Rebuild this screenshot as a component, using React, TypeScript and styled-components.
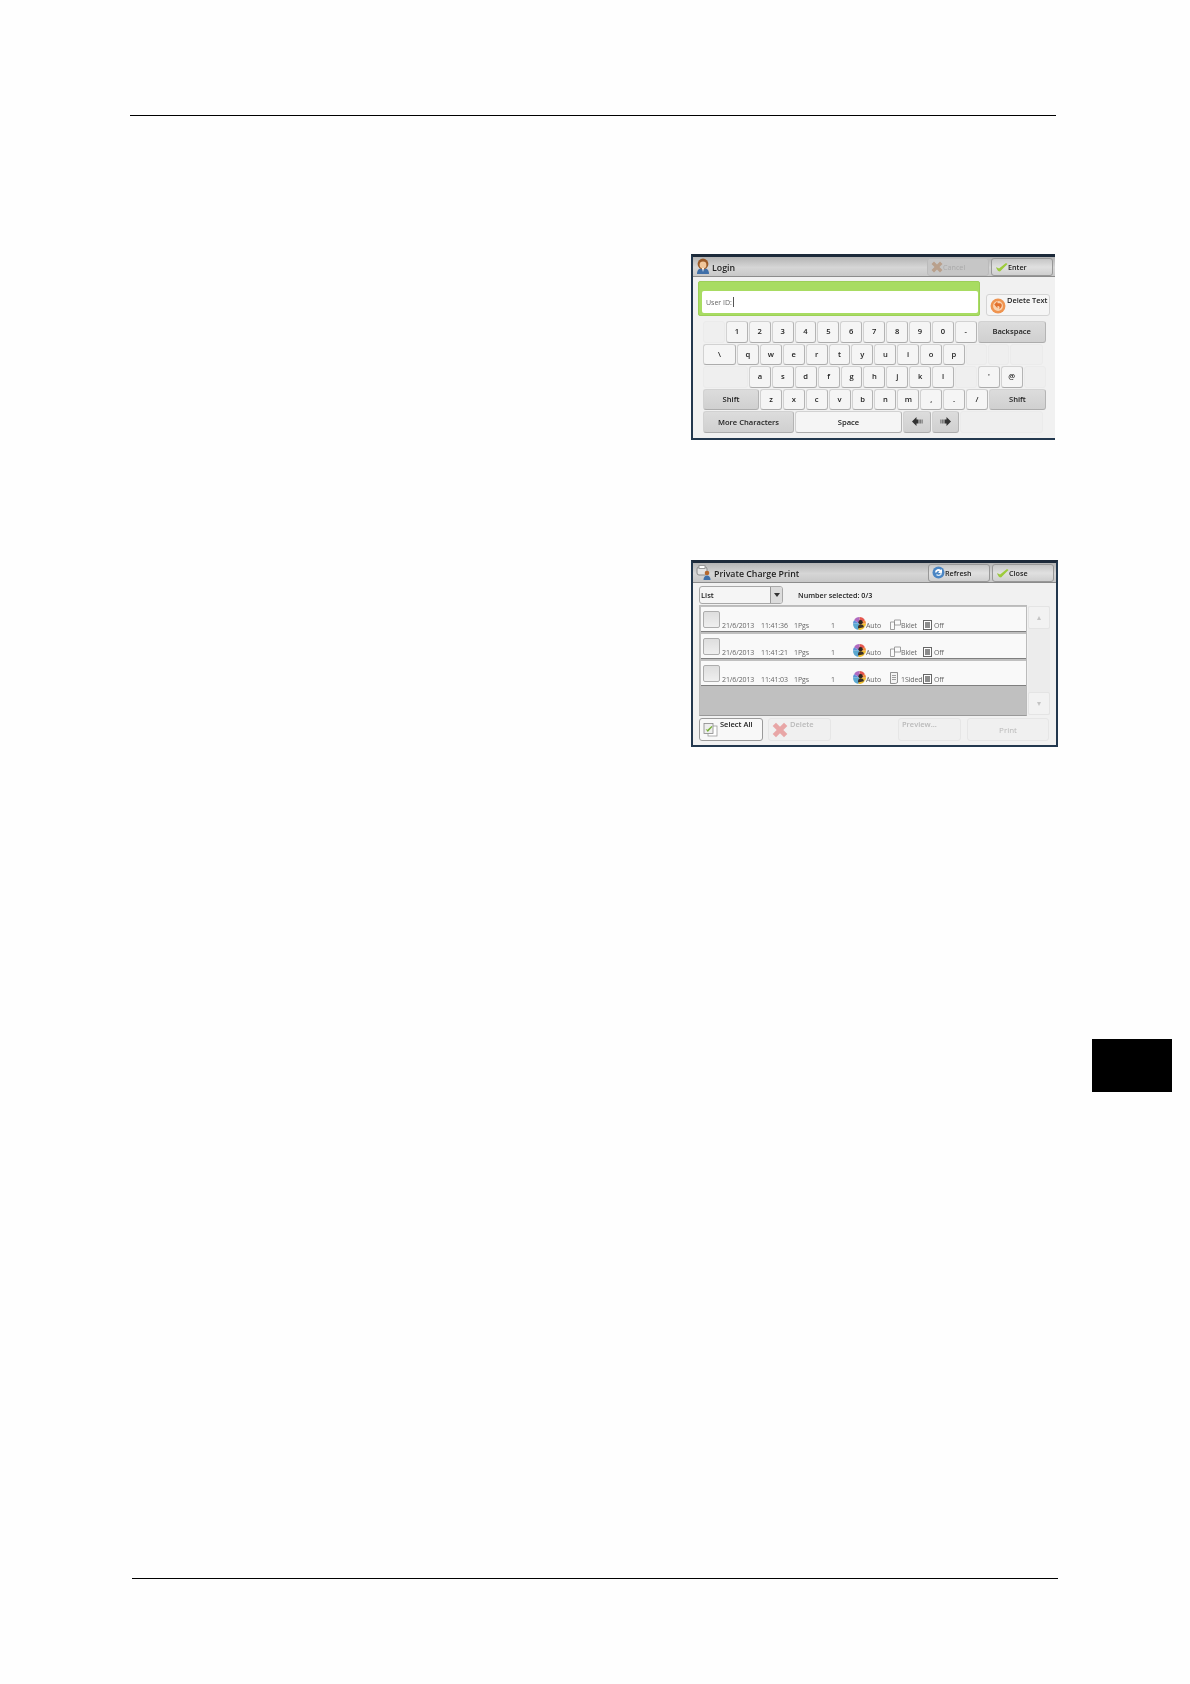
import React from 'react';
import styled, { createGlobalStyle } from 'styled-components';

const GlobalStyle = createGlobalStyle`
  html, body {
    margin: 0;
    padding: 0;
    background: #fefefe;
  }
`;

const Page = styled.div`
  display: flex;
  flex-direction: column;
  width: 1190px;
  height: 1684px;
  padding-top: 115px;
  box-sizing: border-box;
  font-family: 'Open Sans', 'Noto Sans', sans-serif;
`;

const Rule = styled.hr<{ $left: number; $top?: number }>`
  width: 926px;
  height: 1px;
  margin: ${(p) => p.$top || 0}px 0 0 ${(p) => p.$left}px;
  border: none;
  background: #000;
`;

const ChapterTab = styled.div`
  align-self: flex-end;
  width: 80px;
  height: 53px;
  margin-top: 292px;
  margin-right: 18px;
  background: #000;
`;

const Panel = styled.section<{ $width: number; $height: number; $top: number; $cropped?: boolean }>`
  width: ${(p) => p.$width}px;
  height: ${(p) => p.$height}px;
  margin: ${(p) => p.$top}px 0 0 691px;
  box-sizing: border-box;
  border: 2px solid #23384e;
  border-top: 3px solid #1d2a3a;
  border-right: ${(p) => (p.$cropped ? 'none' : '2px solid #23384e')};
  background: #f1f1f1;
  overflow: hidden;
  filter: blur(0.5px);
`;

const TitleBar = styled.header`
  display: flex;
  align-items: center;
  height: 20px;
  box-sizing: border-box;
  padding: 0 0 0 3px;
  background: linear-gradient(#b4b4b4, #d6d6d6 55%, #c8c8c8);
  border-bottom: 1px solid #8c8c8c;
`;

const Title = styled.h1`
  flex: 1;
  margin: 2px 0 0 2px;
  color: #222;
  font-size: 8.8px;
  font-weight: 600;
  line-height: 18px;
`;

const TitleButton = styled.button<{ $muted?: boolean }>`
  display: flex;
  align-items: center;
  gap: 0;
  width: 62px;
  height: 18px;
  margin-right: 2px;
  padding: 0 0 0 3px;
  box-sizing: border-box;
  color: ${(p) => (p.$muted ? '#a9a9a9' : '#222')};
  font-family: inherit;
  font-size: 7.2px;
  font-weight: ${(p) => (p.$muted ? 400 : 600)};
  background: ${(p) => (p.$muted ? '#c6c6c6' : 'linear-gradient(#c6c6c6, #e0e0e0 50%, #cfcfcf)')};
  border: 1px solid ${(p) => (p.$muted ? '#bbb' : '#989898')};
  border-radius: 3px;
`;

const EntryRow = styled.div`
  display: flex;
  align-items: flex-end;
  gap: 6px;
  margin: 4px 0 0 5px;
`;

const GreenField = styled.div`
  display: flex;
  align-items: flex-end;
  width: 282px;
  height: 35px;
  box-sizing: border-box;
  padding: 0 1px 2px 3px;
  background: #a8dc62;
  border: 1px solid #9ccf58;
  border-radius: 2px;
`;

const Input = styled.div`
  display: flex;
  align-items: center;
  width: 100%;
  height: 22px;
  box-sizing: border-box;
  padding-left: 4px;
  color: #666;
  font-size: 7px;
  background: #fff;
  border-radius: 2px;
`;

const Caret = styled.span`
  width: 1px;
  height: 10px;
  margin-left: 1px;
  background: #555;
`;

const DeleteTextButton = styled.button`
  display: flex;
  align-items: flex-start;
  gap: 1px;
  width: 64px;
  height: 22px;
  padding: 0 0 0 3px;
  box-sizing: border-box;
  color: #222;
  font-family: inherit;
  font-size: 7.4px;
  font-weight: 600;
  white-space: nowrap;
  background: #f5f5f5;
  border: 1px solid #d4d4d4;
  border-radius: 3px;

  svg {
    flex: none;
    margin-top: 3px;
  }
`;

const Keyboard = styled.div`
  display: flex;
  flex-direction: column;
  gap: 1px;
  margin: 5px 0 0 10px;
`;

const KeyRow = styled.div`
  display: flex;
  gap: 1px;
  height: 21.6px;
`;

const Key = styled.div<{ $w?: number; $kind?: 'blank' | 'dark' | 'plain' }>`
  display: flex;
  align-items: center;
  justify-content: center;
  flex: none;
  width: ${(p) => p.$w || 21.9}px;
  box-sizing: border-box;
  padding-bottom: 1px;
  color: #222;
  font-size: 7.6px;
  font-weight: 600;
  background: ${(p) =>
    p.$kind === 'blank' ? '#efefef' : p.$kind === 'dark' ? 'linear-gradient(#dcdcdc, #d0d0d0)' : '#f5f5f5'};
  border: 1px solid ${(p) => (p.$kind === 'blank' ? '#ebebeb' : '#d2d2d2')};
  border-right-color: ${(p) => (p.$kind === 'blank' ? '#ebebeb' : '#b4b4b4')};
  border-bottom-color: ${(p) => (p.$kind === 'blank' ? '#ebebeb' : '#acacac')};
  border-radius: 3px;
`;

const SelectRow = styled.div`
  display: flex;
  align-items: center;
  margin: 3px 0 0 6px;
`;

const Dropdown = styled.div`
  display: flex;
  width: 84px;
  height: 18px;
  box-sizing: border-box;
  color: #222;
  font-size: 7.5px;
  font-weight: 600;
  line-height: 16px;
  background: #f5f5f5;
  border: 1px solid #a8a8a8;
  border-radius: 3px;
`;

const DropdownLabel = styled.span`
  flex: 1;
  padding-left: 1px;
`;

const DropdownArrow = styled.span`
  display: flex;
  align-items: center;
  justify-content: center;
  width: 11px;
  background: #dcdcdc;
  border-left: 1px solid #9a9a9a;
  border-radius: 0 2px 2px 0;

  &::after {
    content: '';
    border-top: 4px solid #333;
    border-left: 3px solid transparent;
    border-right: 3px solid transparent;
  }
`;

const SelectedCount = styled.span`
  margin-left: 15px;
  color: #222;
  font-size: 7.2px;
  font-weight: 600;
`;

const ListArea = styled.div`
  display: flex;
  margin: 1px 0 0 6px;
`;

const JobList = styled.div`
  display: flex;
  flex-direction: column;
  gap: 2.6px;
  width: 328px;
  height: 111px;
  box-sizing: border-box;
  padding: 1px 0 0 1px;
  background: #c0c0c0;
  border: 1px solid #bbb;
  border-bottom-color: #999;
`;

const JobRow = styled.div`
  display: grid;
  grid-template-columns: 19px 39px 33px 37px 22px 13px 23px 12px 22px 11px 1fr;
  align-items: end;
  height: 24.6px;
  padding: 0 0 1px 2px;
  box-sizing: border-box;
  color: #666;
  font-size: 7px;
  letter-spacing: -0.1px;
  line-height: 9px;
  white-space: nowrap;
  background: #f9f9f9;
  border-bottom: 1px solid #7f7f7f;
`;

const CheckBox = styled.span`
  width: 17px;
  height: 17px;
  margin-bottom: 2px;
  box-sizing: border-box;
  background: linear-gradient(#dedede, #efefef);
  border: 1px solid #adadad;
  border-radius: 2px;
`;

const ScrollColumn = styled.div`
  display: flex;
  flex-direction: column;
  justify-content: space-between;
  width: 22px;
  height: 109px;
  margin: 1px 0 0 1px;
  background: #ececec;
`;

const ScrollButton = styled.div<{ $down?: boolean }>`
  display: flex;
  align-items: center;
  justify-content: center;
  height: 21px;
  background: #f2f2f2;
  border: 1px solid #e4e4e4;
  border-radius: 2px;

  &::after {
    content: '';
    border-left: 2px solid transparent;
    border-right: 2px solid transparent;
    border-${(p) => (p.$down ? 'top' : 'bottom')}: 4px solid #c4c4c4;
  }
`;

const ActionBar = styled.div`
  display: flex;
  align-items: flex-end;
  margin: 2px 0 0 6px;
`;

const ActionButton = styled.button<{ $w: number; $left?: number; $active?: boolean; $center?: boolean }>`
  display: flex;
  align-items: ${(p) => (p.$center ? 'center' : 'flex-start')};
  justify-content: ${(p) => (p.$center ? 'center' : 'flex-start')};
  gap: 2px;
  width: ${(p) => p.$w}px;
  height: 23px;
  margin-left: ${(p) => p.$left || 0}px;
  padding: ${(p) => (p.$center ? '0' : '0 0 0 3px')};
  box-sizing: border-box;
  color: ${(p) => (p.$active ? '#222' : '#b9b9b9')};
  font-family: inherit;
  font-size: ${(p) => (p.$center ? 8 : 7.5)}px;
  font-weight: ${(p) => (p.$center ? 400 : 600)};
  white-space: nowrap;
  background: ${(p) => (p.$active ? '#f8f8f8' : '#f0f0f0')};
  border: 1px solid ${(p) => (p.$active ? '#9a9a9a' : '#e6e6e6')};
  border-radius: 3px;

  svg {
    flex: none;
    margin-top: ${(p) => (p.$center ? 0 : 3)}px;
  }
`;

const PersonIcon = () => (
  <svg width="14" height="17" viewBox="0 0 14 17">
    <path d="M1 16c0-4 2-6 6-6s6 2 6 6z" fill="#3f6fa8" />
    <circle cx="7" cy="6" r="5.4" fill="#9a5a28" />
    <circle cx="7" cy="7" r="3.4" fill="#f1c79b" />
    <path d="M6 10h2l-1 4z" fill="#fff" />
  </svg>
);

const CheckIcon = () => (
  <svg width="13" height="10" viewBox="0 0 13 10">
    <path d="M1 6l3 3 2-1z" fill="#9b9b9b" />
    <path d="M1 5l3 1.500L11 1l1.500 1L5 9.500 3 9z" fill="#9ccb3b" />
  </svg>
);

const CrossIcon = ({ color, size }: { color: string; size: number }) => (
  <svg width={size} height={size} viewBox="0 0 12 12">
    <path d="M3 .5l3 3 3-3L11.500 3l-3 3 3 3L9 11.500l-3-3-3 3L.5 9l3-3-3-3z" fill={color} />
  </svg>
);

const UndoIcon = () => (
  <svg width="16" height="16" viewBox="0 0 15 15">
    <circle cx="7.500" cy="7.500" r="7" fill="#ef9450" />
    <circle cx="7.500" cy="7.500" r="4.600" fill="#f8d3b0" />
    <path d="M4 6l3-3v2h2.500c2 0 2.500 4-1 5.500 1-1.500.5-3-1-3H7v2z" fill="#e2702c" />
  </svg>
);

const PrinterIcon = () => (
  <svg width="16" height="15" viewBox="0 0 16 15">
    <rect x="1" y="2" width="10" height="8" rx="2" fill="#e4e4e4" stroke="#8a8a8a" />
    <rect x="3" y="0.500" width="6" height="3" fill="#fff" stroke="#9a9a9a" />
    <circle cx="11" cy="8" r="2.300" fill="#b5682e" />
    <path d="M7.500 15c0-3 1.500-4.500 3.500-4.500s3.500 1.500 3.500 4.500z" fill="#3f6fa8" />
  </svg>
);

const RefreshIcon = () => (
  <svg width="13" height="13" viewBox="0 0 13 13">
    <circle cx="6.500" cy="6.500" r="6" fill="#4b86c4" />
    <path d="M3 6.500a3.500 3.500 0 0 1 6-2.500l1-1v4H6l1.500-1.500A2 2 0 0 0 4.500 6.500z" fill="#fff" />
    <path d="M10 6.500a3.500 3.500 0 0 1-6 2.500l1-1a2 2 0 0 0 3.500-1.500z" fill="#d8e8f6" />
  </svg>
);

const ColorIcon = () => (
  <svg width="13" height="13" viewBox="0 0 12 12">
    <path d="M6 6V0a6 6 0 0 1 5 3z" fill="#e4574f" />
    <path d="M6 6L1 3a6 6 0 0 1 5-3z" fill="#b06ac0" />
    <path d="M6 6H0a6 6 0 0 1 1-3z" fill="#5a8fd8" />
    <path d="M6 6H0a6 6 0 0 0 5 6z" fill="#5aa8d0" />
    <path d="M6 6l-1 6a6 6 0 0 0 6-3z" fill="#f0c030" />
    <path d="M6 6h6a6 6 0 0 1-1 3z" fill="#f0c030" />
    <path d="M6 6l5-3a6 6 0 0 1 1 3z" fill="#f08a3c" />
    <circle cx="7" cy="4.800" r="2" fill="#2c2620" />
    <path d="M4.500 10.500c0-2.500 1-3.700 2.500-3.700s3 .7 3 2.700z" fill="#3a3028" />
  </svg>
);

const BookletIcon = () => (
  <svg width="12" height="11" viewBox="0 0 12 11">
    <path d="M1.500 3h4v7.500h-4zM5.500 1h6v5h-6z" fill="#fbfbfb" stroke="#8b8b8b" strokeWidth="0.800" />
  </svg>
);

const SidedIcon = () => (
  <svg width="10" height="12" viewBox="0 0 10 12">
    <path d="M1.500.5h7v10l-2 1h-5z" fill="#f4f4f4" stroke="#777" strokeWidth="0.800" />
    <path d="M3 3.500h4M3 5.500h4M3 7.500h4" stroke="#888" strokeWidth="0.800" />
  </svg>
);

const OffIcon = () => (
  <svg width="9" height="10" viewBox="0 0 9 10">
    <rect x="0.500" y="0.500" width="8" height="9" fill="#fff" stroke="#666" />
    <rect x="2" y="2" width="5" height="6" fill="#8c8c8c" />
  </svg>
);

const SelectAllIcon = () => (
  <svg width="15" height="15" viewBox="0 0 15 15">
    <rect x="5" y="4" width="9" height="10" fill="#fff" stroke="#999" strokeWidth="0.800" />
    <rect x="1" y="1.500" width="9" height="10" fill="#eee" stroke="#888" strokeWidth="0.800" />
    <path d="M2.500 7l2 .8L8.500 4l1 .8L4.800 10z" fill="#79b13a" />
  </svg>
);

const ArrowIcon = ({ flip }: { flip?: boolean }) => (
  <svg width="11" height="9" viewBox="0 0 11 9" transform={flip ? 'scale(-1 1)' : undefined}>
    <path d="M0 4.500L4.500 0v2.500h2v4h-2V9z" fill="#333" />
    <rect x="7.500" y="2.500" width="1.200" height="4" fill="#555" />
    <rect x="9.500" y="2.500" width="1.200" height="4" fill="#777" />
  </svg>
);

type KeySpec = { label?: string; w?: number; kind?: 'blank' | 'dark' | 'plain'; icon?: React.ReactNode };

const toKeys = (chars: string): KeySpec[] => chars.split('').map((label) => ({ label }));

const keyRows: KeySpec[][] = [
  [{ kind: 'blank' }, ...toKeys('1234567890-'), { label: 'Backspace', w: 68, kind: 'dark' }],
  [
    { label: '\\', w: 33 },
    ...toKeys('qwertyuiop'),
    { kind: 'blank', w: 21 },
    { kind: 'blank', w: 21 },
    { kind: 'blank', w: 33 },
  ],
  [
    { kind: 'blank', w: 45 },
    ...toKeys('asdfghjkl'),
    { kind: 'blank' },
    { label: "'" },
    { label: '@' },
    { kind: 'blank' },
  ],
  [{ label: 'Shift', w: 56, kind: 'dark' }, ...toKeys('zxcvbnm,./'), { label: 'Shift', w: 57, kind: 'dark' }],
  [
    { label: 'More Characters', w: 91, kind: 'dark' },
    { label: 'Space', w: 107 },
    { icon: <ArrowIcon />, w: 28, kind: 'dark' },
    { icon: <ArrowIcon flip />, w: 27, kind: 'dark' },
    { kind: 'blank', w: 83 },
  ],
];

const jobs = [
  { time: '11:41:36', layout: 'Bklet', icon: <BookletIcon /> },
  { time: '11:41:21', layout: 'Bklet', icon: <BookletIcon /> },
  { time: '11:41:03', layout: '1Sided', icon: <SidedIcon /> },
];

const App = () => {
  return (
    <Page>
      <GlobalStyle />
      <Rule $left={130} />

      <Panel $width={364} $height={186} $top={138} $cropped>
        <TitleBar>
          <PersonIcon />
          <Title>Login</Title>
          <TitleButton $muted>
            <CrossIcon color="#b9a08c" size={12} />
            Cancel
          </TitleButton>
          <TitleButton>
            <CheckIcon />
            Enter
          </TitleButton>
        </TitleBar>
        <EntryRow>
          <GreenField>
            <Input>
              User ID:
              <Caret />
            </Input>
          </GreenField>
          <DeleteTextButton>
            <UndoIcon />
            Delete Text
          </DeleteTextButton>
        </EntryRow>
        <Keyboard>
          {keyRows.map((row, i) => (
            <KeyRow key={i}>
              {row.map((k, j) => (
                <Key key={j} $w={k.w} $kind={k.kind}>
                  {k.icon || k.label}
                </Key>
              ))}
            </KeyRow>
          ))}
        </Keyboard>
      </Panel>

      <Panel $width={367} $height={187} $top={120}>
        <TitleBar>
          <PrinterIcon />
          <Title>Private Charge Print</Title>
          <TitleButton>
            <RefreshIcon />
            Refresh
          </TitleButton>
          <TitleButton>
            <CheckIcon />
            Close
          </TitleButton>
        </TitleBar>
        <SelectRow>
          <Dropdown>
            <DropdownLabel>List</DropdownLabel>
            <DropdownArrow />
          </Dropdown>
          <SelectedCount>Number selected: 0/3</SelectedCount>
        </SelectRow>
        <ListArea>
          <JobList>
            {jobs.map((job) => (
              <JobRow key={job.time}>
                <CheckBox />
                <span>21/6/2013</span>
                <span>{job.time}</span>
                <span>1Pgs</span>
                <span>1</span>
                <ColorIcon />
                <span>Auto</span>
                {job.icon}
                <span>{job.layout}</span>
                <OffIcon />
                <span>Off</span>
              </JobRow>
            ))}
          </JobList>
          <ScrollColumn>
            <ScrollButton />
            <ScrollButton $down />
          </ScrollColumn>
        </ListArea>
        <ActionBar>
          <ActionButton $w={64} $active>
            <SelectAllIcon />
            Select All
          </ActionButton>
          <ActionButton $w={63} $left={5}>
            <CrossIcon color="#e8a6a6" size={16} />
            Delete
          </ActionButton>
          <ActionButton $w={63} $left={67}>
            Preview...
          </ActionButton>
          <ActionButton $w={82} $left={6} $center>
            Print
          </ActionButton>
        </ActionBar>
      </Panel>

      <ChapterTab />
      <Rule $left={132} $top={486} />
    </Page>
  );
};

export default App;
